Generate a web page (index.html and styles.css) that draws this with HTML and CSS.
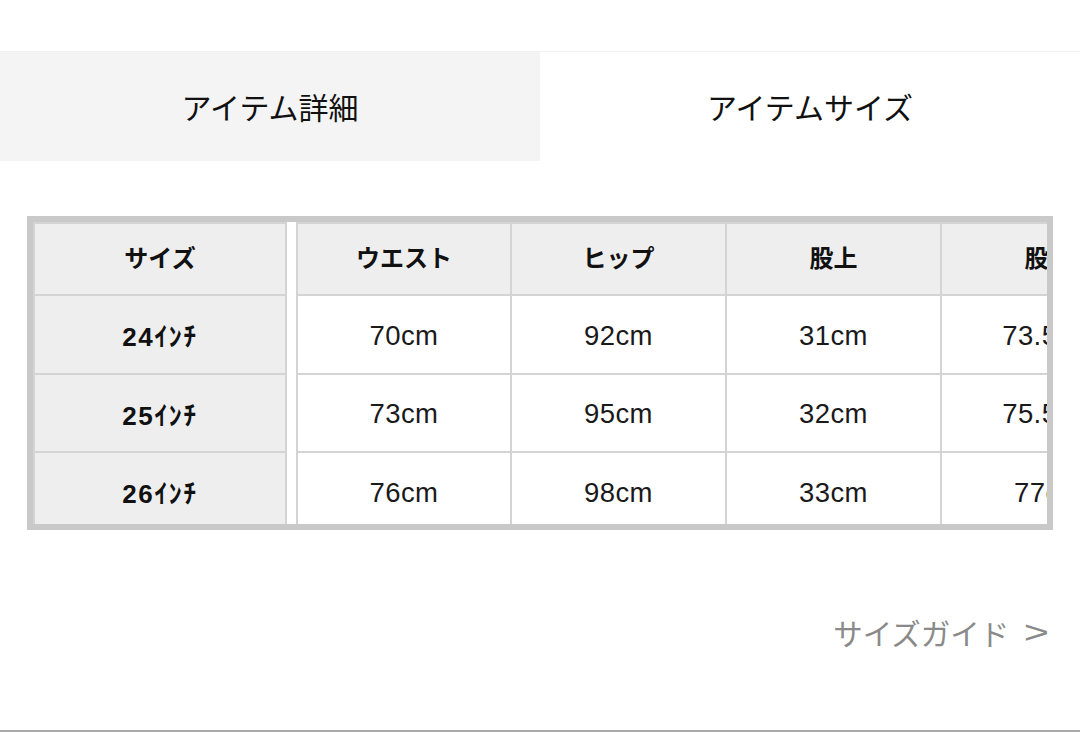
FILE: index.html
```html
<!DOCTYPE html>
<html lang="ja">
<head>
<meta charset="utf-8">
<title>アイテムサイズ</title>
<link rel="stylesheet" href="styles.css">
</head>
<body>
<div class="page">
  <div class="tabs">
    <div class="tab tab-inactive">アイテム詳細</div>
    <div class="tab tab-active">アイテムサイズ</div>
  </div>

  <div class="size-table">
    <div class="fixed-col">
      <div class="cell head row-h">サイズ</div>
      <div class="cell head row-1 size-label">24ｲﾝﾁ</div>
      <div class="cell head row-2 size-label">25ｲﾝﾁ</div>
      <div class="cell head row-3 size-label">26ｲﾝﾁ</div>
    </div>
    <div class="scroll">
      <div class="grid">
        <div class="cell head">ウエスト</div>
        <div class="cell head">ヒップ</div>
        <div class="cell head">股上</div>
        <div class="cell head">股下</div>

        <div class="cell num">70cm</div>
        <div class="cell num">92cm</div>
        <div class="cell num">31cm</div>
        <div class="cell num">73.5cm</div>

        <div class="cell num">73cm</div>
        <div class="cell num">95cm</div>
        <div class="cell num">32cm</div>
        <div class="cell num">75.5cm</div>

        <div class="cell num">76cm</div>
        <div class="cell num">98cm</div>
        <div class="cell num">33cm</div>
        <div class="cell num">77cm</div>
      </div>
    </div>
  </div>

  <div class="guide"><span class="guide-text">サイズガイド</span><span class="guide-arrow">&gt;</span></div>

  <div class="bottom-rule"></div>
</div>
</body>
</html>
```

FILE: styles.css
```css
html, body {
  margin: 0;
  padding: 0;
  background: #ffffff;
}

body {
  font-family: "Noto Sans CJK JP", "Noto Sans", sans-serif;
  color: #111111;
}

.page {
  width: 1080px;
  height: 732px;
  display: flex;
  flex-direction: column;
  overflow: hidden;
}

.tabs {
  margin-top: 51px;
  display: flex;
  height: 110px;
  border-top: 1px solid #f1f1f1;
  box-sizing: border-box;
}

.tab {
  flex: 0 0 540px;
  display: flex;
  align-items: center;
  justify-content: center;
  font-size: 30px;
  font-weight: 400;
  color: #111111;
  padding-bottom: 2px;
  box-sizing: border-box;
}

.tab-inactive {
  background: #f4f4f4;
}

.tab-active {
  background: #ffffff;
}

.size-table {
  margin: 55px 27px 0 27px;
  border: 6px solid #c9c9c9;
  height: 314px;
  box-sizing: border-box;
  display: flex;
  overflow: hidden;
  background: #ffffff;
}

.fixed-col {
  flex: 0 0 254px;
  display: flex;
  flex-direction: column;
  border-left: 2px solid #d4d4d4;
  border-right: 2px solid #d4d4d4;
  box-sizing: border-box;
  margin-right: 9px;
}

.cell {
  display: flex;
  align-items: center;
  justify-content: center;
  border-top: 2px solid #d4d4d4;
  box-sizing: border-box;
  white-space: nowrap;
  overflow: hidden;
}

.head {
  background: #eeeeee;
  font-weight: 700;
  font-size: 24px;
  color: #111111;
  padding-bottom: 6px;
}

.row-h { flex: 0 0 72px; }
.row-1 { flex: 0 0 79px; }
.row-2 { flex: 0 0 78px; }
.row-3 { flex: 0 0 79px; }

.size-label {
  font-family: "Liberation Sans", "Noto Sans CJK JP", sans-serif;
  font-size: 26px;
  letter-spacing: 1.5px;
  padding-top: 0;
  padding-bottom: 0;
}

.scroll {
  flex: 1 1 auto;
  overflow: hidden;
}

.grid {
  display: grid;
  grid-template-columns: 214px 215px 215px 215px;
  grid-template-rows: 72px 79px 78px 79px;
  width: 859px;
}

.grid .cell {
  border-left: 2px solid #d4d4d4;
}

.num {
  background: #ffffff;
  font-family: "Liberation Sans", "Noto Sans CJK JP", sans-serif;
  font-size: 27.5px;
  letter-spacing: 0.4px;
  color: #1a1a1a;
  padding-top: 2px;
}

.guide {
  margin-top: 82px;
  padding-right: 31px;
  display: flex;
  justify-content: flex-end;
  align-items: center;
  height: 40px;
  color: #8a8a8a;
  font-size: 29.5px;
  font-weight: 400;
}

.guide-arrow {
  display: inline-block;
  font-family: "Liberation Sans", sans-serif;
  font-size: 32px;
  margin-left: 18px;
  margin-right: 3px;
  transform: scaleX(1.35);
}

.bottom-rule {
  margin-top: auto;
  height: 2px;
  background: #a9a9a9;
}
```
